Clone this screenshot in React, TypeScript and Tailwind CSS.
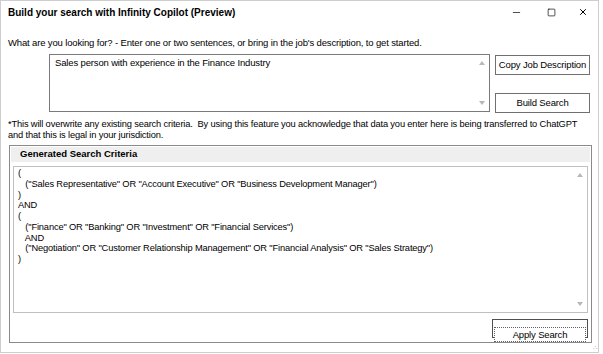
import { Minus, Square, X } from 'lucide-react';

// ─── Small scroll arrows like the WinForms textbox ───────────────────────────
function ArrowUp() {
  return <div className="w-0 h-0 border-l-[3px] border-r-[3px] border-b-[4px] border-l-transparent border-r-transparent border-b-[#b8b8b8]" />;
}

function ArrowDown() {
  return <div className="w-0 h-0 border-l-[3px] border-r-[3px] border-t-[4px] border-l-transparent border-r-transparent border-t-[#b8b8b8]" />;
}

const CRITERIA = [
  '(',
  '   ("Sales Representative" OR "Account Executive" OR "Business Development Manager")',
  ')',
  'AND',
  '(',
  '   ("Finance" OR "Banking" OR "Investment" OR "Financial Services")',
  '   AND',
  '   ("Negotiation" OR "Customer Relationship Management" OR "Financial Analysis" OR "Sales Strategy")',
  ')',
];

export default function App() {
  return (
    <div
      className="w-[603px] h-[354px] bg-white text-black overflow-hidden"
      style={{ fontFamily: '"Liberation Sans", Arial, sans-serif' }}
    >
      <div className="w-[599px] h-[353px] border border-[#cdcdcd] flex flex-col">
        {/* Title bar */}
        <div className="h-[22px] flex items-center pl-[7px]">
          <span className="text-[10px] font-bold">
            Build your search with Infinity Copilot (Preview)
          </span>
          <div className="ml-auto flex items-center">
            <div className="w-[37px] flex justify-center"><Minus size={11} strokeWidth={1.5} /></div>
            <div className="w-[33px] flex justify-center"><Square size={9} strokeWidth={1.8} /></div>
            <div className="w-[30px] flex justify-center"><X size={10} strokeWidth={2.4} /></div>
          </div>
        </div>

        {/* Prompt */}
        <div className="px-[7px] pt-[14px] text-[9.5px] tracking-[-0.15px] leading-[12px] whitespace-nowrap">
          What are you looking for? - Enter one or two sentences, or bring in the job's description, to get started.
        </div>

        <div className="flex pl-[48px] pt-[5px] gap-[5px]">
          <div className="w-[441px] h-[58px] border border-[#7a7a7a] flex">
            <div className="flex-1 pl-[5px] pt-[2px] text-[9.5px] tracking-[-0.15px] leading-[12px]">
              Sales person with experience in the Finance Industry
            </div>
            <div className="w-[14px] flex flex-col items-center justify-between py-[6px]">
              <ArrowUp />
              <ArrowDown />
            </div>
          </div>
          <div className="flex flex-col justify-between w-[95px] h-[59px] pt-[1px]">
            <button className="h-[20px] border border-[#707070] bg-white text-[9.5px] tracking-[-0.15px] whitespace-nowrap">Copy Job Description</button>
            <button className="h-[20px] border border-[#707070] bg-white text-[9.5px] tracking-[-0.15px]">Build Search</button>
          </div>
        </div>

        {/* Disclaimer */}
        <div className="px-[7px] pt-[6px] text-[9.3px] tracking-[-0.15px] leading-[11px] whitespace-nowrap">
          <p>*This will overwrite any existing search criteria.&nbsp; By using this feature you acknowledge that data you enter here is being transferred to ChatGPT</p>
          <p>and that this is legal in your jurisdiction.</p>
        </div>

        {/* Group box */}
        <div className="ml-[8px] mt-[4px] w-[583px] h-[198px] border border-[#8a8a8a] flex flex-col">
          <div className="h-[15px] mx-[1px] mt-[1px] bg-[#efefef] flex items-center pl-[9px] text-[9.5px] font-bold">
            Generated Search Criteria
          </div>
          <div className="mx-[3px] mt-[4px] h-[147px] border border-[#c0c0c0] flex">
            <div className="flex-1 pl-[4px] pt-[1px] text-[9.3px] tracking-[-0.15px] leading-[10.75px] whitespace-pre">
              {CRITERIA.map((line, i) => (
                <div key={i}>{line}</div>
              ))}
            </div>
            <div className="w-[14px] flex flex-col items-center justify-between py-[6px]">
              <ArrowUp />
              <ArrowDown />
            </div>
          </div>
          <div className="flex justify-end pr-[3px] pt-[6px]">
            <div className="w-[96px] h-[19px] border border-[#505050] p-[1px]">
              <button className="w-full h-full border border-dotted border-[#606060] bg-white text-[9.5px] tracking-[-0.15px] leading-none">
                Apply Search
              </button>
            </div>
          </div>
        </div>
        <div className="flex-1 flex items-end justify-end pr-[1px] pb-[1px]">
          <span className="text-[7px] leading-none text-[#b0b0b0]">∴</span>
        </div>
      </div>
    </div>
  );
}
